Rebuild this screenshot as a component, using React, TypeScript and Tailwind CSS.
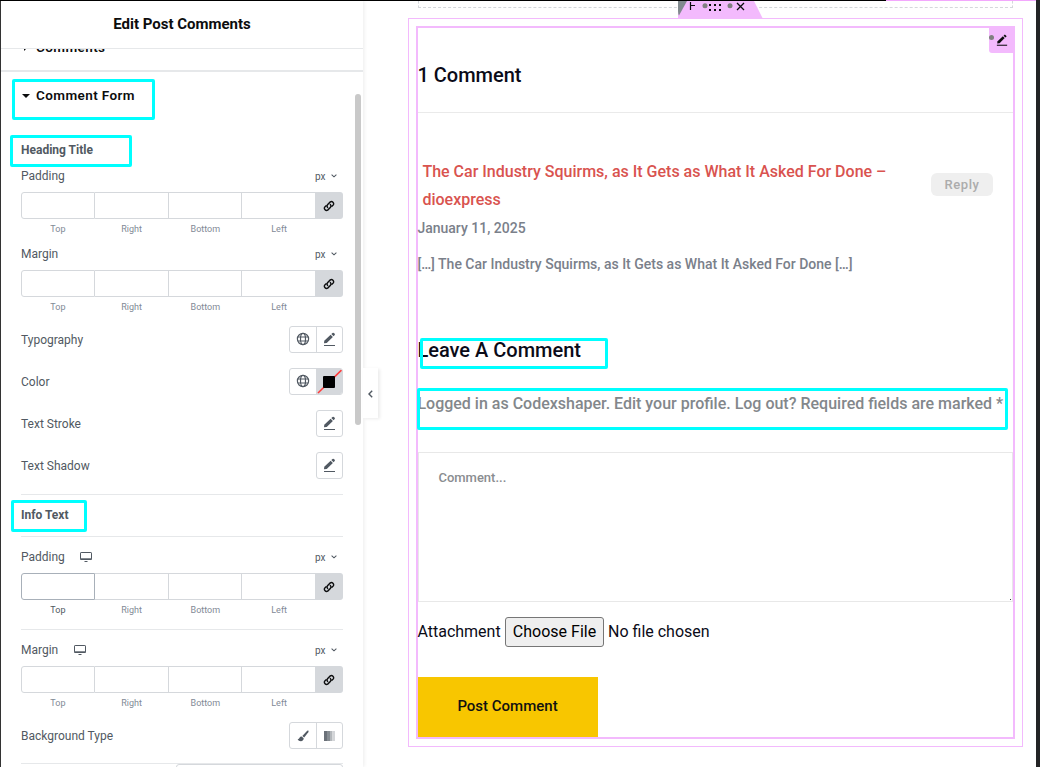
import type { ReactNode } from "react";

const CYAN = "absolute z-20 border-[3px] border-[#00ffff] rounded-[2px] pointer-events-none";

function LinkIcon() {
  return (
    <svg width="12" height="12" viewBox="0 0 12 12" fill="none" stroke="#0c0d0e" strokeWidth="1.4" strokeLinecap="round">
      <path d="M4.6 7.4A2.1 2.1 0 0 1 4.7 4.6L7.3 1.9A2.2 2.2 0 0 1 10.3 4.9L8.9 6.3" />
      <path d="M7.4 4.6A2.1 2.1 0 0 1 7.3 7.4L4.7 10.1A2.2 2.2 0 0 1 1.7 7.1L3.1 5.7" />
    </svg>
  );
}

function PencilIcon() {
  return (
    <svg className="-mt-px" width="14" height="14" viewBox="0 0 14 14" fill="#515962">
      <path d="M1 11.3L1.3 8.7L7.6 2.7L9.9 5L3.7 11Z" />
      <path d="M8.3 2.1L9.5 0.9Q10.2 0.4 10.9 1L11.7 1.8Q12.2 2.5 11.7 3.1L10.6 4.3Z" />
      <rect x="1" y="13" width="11" height="1" />
    </svg>
  );
}

function GlobeIcon() {
  return (
    <svg className="-mt-px" width="14" height="14" viewBox="0 0 14 14" fill="none" stroke="#515962" strokeWidth="1.2">
      <circle cx="7" cy="7" r="5.6" />
      <ellipse cx="7" cy="7" rx="2.5" ry="5.6" />
      <path d="M1.8 5H12.2M1.8 9H12.2" />
    </svg>
  );
}

function MonitorIcon() {
  return (
    <svg width="12" height="10" viewBox="0 0 12 10" fill="none">
      <rect x="0.5" y="0.5" width="11" height="7" rx="0.6" stroke="#515962" />
      <rect x="0.5" y="6.3" width="11" height="1.7" fill="#515962" />
      <rect x="4.5" y="9" width="3" height="1" fill="#515962" />
    </svg>
  );
}

function Unit() {
  return (
    <span className="mr-[6px] flex items-center gap-[5.5px] text-[10px] text-[#515962]">
      px
      <svg width="6" height="4" viewBox="0 0 6 4" fill="none" stroke="#515962" strokeWidth="1.1">
        <path d="M0.6 0.7L3 2.8L5.4 0.7" />
      </svg>
    </span>
  );
}

function Dimensions({ label, device = false, active = false }: { label: string; device?: boolean; active?: boolean }) {
  return (
    <div>
      <div className="flex h-8 items-center justify-between">
        <span className="flex items-center gap-[15.5px] text-[12px] leading-[17px]">
          {label}
          {device && <MonitorIcon />}
        </span>
        <Unit />
      </div>
      <div className="flex h-[27px]">
        <div className={active ? "w-[74px] rounded-l-[3px] border border-[#a8b0b9]" : "w-[74px] rounded-l-[3px] border border-[#d5d8dc]"} />
        <div className="w-[74px] border-y border-r border-[#d5d8dc]" />
        <div className="w-[73px] border-y border-r border-[#d5d8dc]" />
        <div className="w-[73px] border-y border-[#d5d8dc]" />
        <div className="flex w-7 items-center justify-center rounded-r-[3px] bg-[#d5d8dc]">
          <LinkIcon />
        </div>
      </div>
      <div className="grid h-[19px] w-[295px] grid-cols-4 items-center pt-[2px] text-center text-[9px] leading-[13px] text-[#818a96]">
        <span className={active ? "text-[#515962]" : ""}>Top</span>
        <span>Right</span>
        <span>Bottom</span>
        <span>Left</span>
      </div>
    </div>
  );
}

function Row({ label, children }: { label: string; children: ReactNode }) {
  return (
    <div className="flex h-[42px] items-start justify-between pt-2">
      <span className="text-[12px] leading-[29px]">{label}</span>
      <div className="flex h-[27px] overflow-hidden rounded-[3px] border border-[#d5d8dc]">{children}</div>
    </div>
  );
}

function Cell({ children, divided = false }: { children: ReactNode; divided?: boolean }) {
  return (
    <div className={divided ? "flex w-[27px] items-center justify-center border-r border-[#d5d8dc]" : "flex w-[25px] items-center justify-center"}>
      {children}
    </div>
  );
}

function Sidebar() {
  return (
    <aside className="flex h-full w-[363px] shrink-0 flex-col overflow-hidden border-l border-[#333] bg-white shadow-[1px_0_4px_rgba(0,0,0,0.08)]">
      <header className="flex h-[48px] shrink-0 items-center justify-center border-b border-[#e6e8ea] pb-px text-[15px] font-bold text-[#0c0d0e]">
        Edit Post Comments
      </header>
      <div className="flex h-[23px] shrink-0 items-start overflow-hidden border-b-2 border-[#e6e8ea] pl-[21px] text-[#0c0d0e]">
        <div className="-mt-[12px] flex items-center">
          <svg className="-mt-px" width="8" height="8" viewBox="0 0 8 8">
            <path d="M2 0L6 4L2 8Z" fill="#0c0d0e" />
          </svg>
          <span className="ml-[6px] text-[13.5px] leading-5 font-semibold tracking-[0.4px]">Comments</span>
        </div>
      </div>
      <div className="flex h-[47px] shrink-0 items-center pl-[21px] text-[#0c0d0e]">
        <svg className="mt-px" width="8" height="4" viewBox="0 0 8 4">
          <path d="M0 0H8L4 4Z" fill="#0c0d0e" />
        </svg>
        <span className="ml-[6px] pb-px text-[13.5px] leading-5 font-semibold tracking-[0.4px]">Comment Form</span>
      </div>
      <div className="mt-[19px] ml-5 w-[322px] shrink-0 text-[#515962]">
        <div className="flex h-[22px] items-center pt-[2px] text-[12px] leading-[17px] font-bold">Heading Title</div>
        <Dimensions label="Padding" />
        <Dimensions label="Margin" />
        <div className="mt-[2px]">
          <Row label="Typography">
            <Cell divided><GlobeIcon /></Cell>
            <Cell><PencilIcon /></Cell>
          </Row>
          <Row label="Color">
            <Cell divided><GlobeIcon /></Cell>
            <div className="w-[25px] bg-[#d5d8dc]">
              <svg width="25" height="25" viewBox="0 0 25 25">
                <path d="M1 24L24.5 1" stroke="#ff3b3b" strokeWidth="1.6" />
                <rect x="6" y="7" width="12" height="12" rx="1" fill="#000" />
              </svg>
            </div>
          </Row>
          <Row label="Text Stroke"><Cell><PencilIcon /></Cell></Row>
          <Row label="Text Shadow"><Cell><PencilIcon /></Cell></Row>
        </div>
        <div className="mt-2 flex h-[43px] items-center border-y border-[#e6e8ea] text-[12px] leading-[17px] font-bold">Info Text</div>
        <div className="mt-1 border-b border-[#e6e8ea] pb-[10px]">
          <Dimensions label="Padding" device active />
        </div>
        <div className="mt-1">
          <Dimensions label="Margin" device />
        </div>
        <div className="mt-[2px] h-[50px] border-b border-[#e6e8ea]">
          <Row label="Background Type">
            <Cell divided>
              <svg width="12" height="12" viewBox="0 0 12 12" fill="#515962">
                <path d="M11.3 0.6Q12 1.2 11.3 2.2L7.2 7.6L5.3 5.9L10.2 0.8Q10.8 0.3 11.3 0.6Z" />
                <path d="M4.7 6.4L6.7 8.2Q6.6 10.9 3.8 11.2Q1.4 11.2 0.6 9Q2.1 9.3 2.5 7.7Q3.3 6.2 4.7 6.4Z" />
              </svg>
            </Cell>
            <Cell>
              <svg width="11" height="10" viewBox="0 0 11 10">
                <rect width="3" height="10" fill="#6a7078" />
                <rect x="3" width="3" height="10" fill="#858b91" />
                <rect x="6" width="2.5" height="10" fill="#b3b7bb" />
                <rect x="8.5" width="2.5" height="10" fill="#d3d5d8" />
              </svg>
            </Cell>
          </Row>
        </div>
        <div className="ml-[155px] h-[27px] rounded-[3px] border border-[#d5d8dc]" />
      </div>
    </aside>
  );
}

function Comments() {
  return (
    <main className="mt-[10px] ml-[45px] flex h-[729px] w-[615px] border border-[#f3bafd] p-[7px]">
      <div className="flex w-full flex-col border-2 border-[#f3bafd] text-[#0b0b18]">
        <h2 className="flex h-[85px] shrink-0 items-center border-b border-[#eaeaea] pt-[9px] text-[20px] font-medium">
          <span className="-ml-[0.6px]">1 Comment</span>
        </h2>
        <div className="mt-[44px] flex h-[56px] justify-between pl-[4.4px]">
          <h3 className="w-[480px] pt-px text-[16px] leading-7 font-medium text-[#d9534f]">
            The Car Industry Squirms, as It Gets as What It Asked For Done – dioexpress
          </h3>
          <div className="mt-4 mr-5 flex h-[23px] w-[62px] items-center justify-center rounded-[6px] bg-[#efefef] text-[13px] font-medium tracking-[0.6px] text-[#acacac]">
            Reply
          </div>
        </div>
        <p className="mt-[5px] -ml-[0.6px] h-5 text-[14px] leading-5 font-medium text-[#7a808a]">January 11, 2025</p>
        <p className="mt-4 -ml-[0.6px] h-5 text-[14px] leading-5 font-medium text-[#7a808a]">
          […] The Car Industry Squirms, as It Gets as What It Asked For Done […]
        </p>
        <h2 className="mt-[62px] -ml-[0.6px] h-7 text-[20px] leading-7 font-medium">Leave A Comment</h2>
        <p className="mt-[28px] -ml-[0.6px] h-6 text-[16px] leading-6 font-medium whitespace-nowrap text-[#83878b]">
          Logged in as Codexshaper. Edit your profile. Log out? Required fields are marked *
        </p>
        <div className="mt-[36px] flex h-[150px] items-end border border-[#e8e8e8]">
          <span className="grow self-start pt-[16px] pl-[19.4px] text-[13px] leading-[18px] font-medium text-[#8a8d90]">Comment...</span>
          <span className="mr-px mb-px size-px bg-[#333]" />
        </div>
        <div className="mt-[15px] -ml-[0.6px] flex h-[30px] items-center text-[16px]">
          <span className="w-[83px]">Attachment</span>
          <span className="mr-[4px] ml-[4.6px] flex h-[30px] w-[99px] items-center justify-center rounded-[3px] border border-[#767676] bg-[#efefef] text-black">
            Choose File
          </span>
          <span>No file chosen</span>
        </div>
        <div className="mt-[30px] flex h-[60px] w-[180px] items-center justify-center bg-[#f8c600] pr-px pb-[2px] text-[15px] font-medium text-[#111]">
          Post Comment
        </div>
      </div>
    </main>
  );
}

export default function App() {
  return (
    <div className="relative flex h-[767px] w-[1040px] flex-col overflow-hidden bg-white font-['Roboto',sans-serif]">
      <div className="flex h-px shrink-0">
        <div className="w-[886px] bg-black" />
        <div className="w-[150px] bg-[#f3a8fd]" />
        <div className="w-1 bg-[#232425]" />
      </div>
      <div className="flex min-h-0 grow">
        <Sidebar />
        <div className="flex grow flex-col">
          <div className="ml-[55px] h-[7px] w-[595px] border-x border-b border-dashed border-[#d5d8dc]" />
          <Comments />
        </div>
        <div className="w-1 shrink-0 bg-[#232425]" />
      </div>

      <div className="absolute top-[94px] left-[355px] h-[331px] w-[6px] rounded-full bg-[#c9c9c9]" />
      <div className="absolute top-[368px] left-[363px] flex h-[50px] w-[15px] items-center justify-center bg-white pt-[2px] shadow-[2px_1px_3px_rgba(0,0,0,0.08)]">
        <svg width="5" height="8" viewBox="0 0 5 8" fill="none" stroke="#515962" strokeWidth="1.4">
          <path d="M4.2 0.8L1 4L4.2 7.2" />
        </svg>
      </div>

      <svg className="absolute top-px left-[677px]" width="87" height="18" viewBox="0 0 87 18">
        <path d="M1 0H77L86 18H1Z" fill="#f3bafd" />
        <path d="M1 0H10L2 14.5Q1 13 1 10Z" fill="#818a8e" />
        <path d="M13.5 1V9M13.5 4.5H18" stroke="#0c0d0e" strokeWidth="1.2" fill="none" />
        <circle cx="28" cy="4.7" r="2.5" fill="#808080" />
        <circle cx="53" cy="4.7" r="2.5" fill="#808080" />
        <g fill="#0c0d0e">
          <rect x="32" y="3" width="2" height="2" /><rect x="37" y="3" width="2" height="2" /><rect x="42" y="3" width="2" height="2" />
          <rect x="32" y="8" width="2" height="2" /><rect x="37" y="8" width="2" height="2" /><rect x="42" y="8" width="2" height="2" />
        </g>
        <path d="M60 2L67 9M67 2L60 9" stroke="#0c0d0e" strokeWidth="1.3" />
      </svg>
      <div className="absolute top-[27px] left-[989px] flex h-[26px] w-[26px] items-center justify-center rounded-bl-[3px] bg-[#f3bafd]">
        <span className="absolute top-[8px] left-0 size-[5px] rounded-full bg-[#808080]" />
        <svg className="-mt-px" width="12" height="12" viewBox="0 0 14 14" fill="#0c0d0e">
          <path d="M1.4 11.2L1.8 8.6L8 2.6L10.1 4.7L4.2 10.7Z" />
          <path d="M8.8 1.9L10.3 0.7L12.5 2.6L11 4Z" />
          <rect x="1" y="12.5" width="12" height="1.2" />
        </svg>
      </div>

      <div className={CYAN + " top-[79px] left-[12px] h-[41px] w-[143px]"} />
      <div className={CYAN + " top-[135px] left-[10px] h-[32px] w-[122px]"} />
      <div className={CYAN + " top-[500px] left-[11px] h-[32px] w-[76px]"} />
      <div className={CYAN + " top-[338px] left-[420px] h-[31px] w-[188px]"} />
      <div className={CYAN + " top-[388px] left-[417px] h-[42px] w-[591px]"} />
    </div>
  );
}
